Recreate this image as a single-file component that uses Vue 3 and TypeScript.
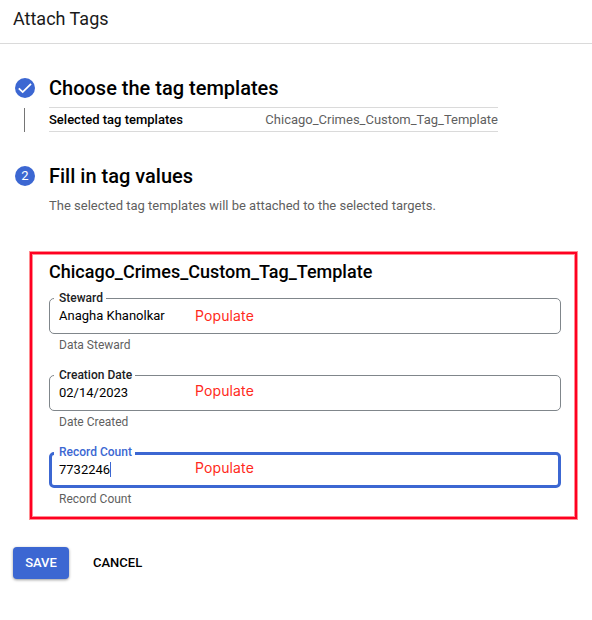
<script setup lang="ts">
import { ref } from 'vue'

interface TagField {
  id: string
  label: string
  value: string
  hint: string
}

const template = 'Chicago_Crimes_Custom_Tag_Template'
const active = ref('count')
const fields = ref<TagField[]>([
  { id: 'steward', label: 'Steward', value: 'Anagha Khanolkar', hint: 'Data Steward' },
  { id: 'date', label: 'Creation Date', value: '02/14/2023', hint: 'Date Created' },
  { id: 'count', label: 'Record Count', value: '7732246', hint: 'Record Count' },
])
</script>

<template>
  <main class="panel">
    <header class="top">Attach Tags</header>

    <section class="step first">
      <div class="rail">
        <svg class="badge" viewBox="0 0 20 20" aria-hidden="true">
          <circle cx="10" cy="10" r="10" />
          <path d="M3.8 10.3 7.7 14.1 16 5.8" />
        </svg>
        <span class="line"></span>
      </div>
      <div class="body">
        <h2 class="title">Choose the tag templates</h2>
        <div class="summary">
          <strong>Selected tag templates</strong>
          <span>{{ template }}</span>
        </div>
      </div>
    </section>

    <section class="step second">
      <div class="rail"><span class="badge number">2</span></div>
      <div class="body">
        <h2 class="title">Fill in tag values</h2>
        <p class="note">The selected tag templates will be attached to the selected targets.</p>
      </div>
    </section>

    <section class="highlight">
      <h3 class="name">{{ template }}</h3>
      <div v-for="f in fields" :key="f.id" class="field" :class="{ active: active === f.id }">
        <div class="box" @click="active = f.id">
          <span class="label">{{ f.label }}</span>
          <span class="value">{{ f.value }}</span>
          <span v-if="active === f.id" class="caret"></span>
          <span class="mark" :class="f.id">Populate</span>
        </div>
        <div class="hint">{{ f.hint }}</div>
      </div>
    </section>

    <footer class="actions">
      <button class="btn save">SAVE</button>
      <button class="btn cancel">CANCEL</button>
    </footer>
  </main>
</template>

<style>
body {
  background: #fff;
}
</style>

<style scoped>
.panel {
  box-sizing: border-box;
  width: 592px;
  height: 620px;
  overflow: hidden;
  font-family: Roboto, 'Liberation Sans', sans-serif;
  font-size: 13px;
  color: #000;
}
.top {
  box-sizing: border-box;
  height: 44px;
  padding: 7px 13px 0;
  border-bottom: 1px solid #dadada;
  font-size: 18px;
  line-height: 24px;
  color: #1a1a1a;
}
.step {
  display: flex;
  padding-left: 15px;
}
.first {
  padding-top: 34px;
}
.second {
  padding-top: 34px;
}
.rail {
  width: 34px;
  flex: none;
}
.badge {
  display: block;
  width: 20px;
  height: 20px;
}
.badge circle {
  fill: #3c67d2;
}
.badge path {
  fill: none;
  stroke: #fff;
  stroke-width: 1.8;
}
.number {
  border-radius: 50%;
  background: #3c67d2;
  color: #fff;
  font-size: 13px;
  line-height: 20px;
  text-align: center;
}
.line {
  display: block;
  width: 1px;
  height: 24px;
  margin: 10px 0 0 9px;
  background: #757575;
}
.title {
  margin: 0;
  font-size: 20px;
  font-weight: 500;
  line-height: 20px;
}
.summary {
  box-sizing: border-box;
  display: flex;
  justify-content: space-between;
  width: 449px;
  height: 25px;
  margin-top: 9px;
  border: solid #dadada;
  border-width: 1px 0;
  line-height: 23px;
}
.summary strong {
  font-weight: 500;
}
.summary span,
.note,
.hint {
  color: #5f5f5f;
}
.note {
  margin: 11px 0 0;
  line-height: 18px;
}
.highlight {
  box-sizing: border-box;
  width: 547px;
  height: 267px;
  margin: 37px 0 0 30px;
  padding: 8px 0 0 17px;
  border: 2px solid #ff0022;
  box-shadow: 0 0 0 1px #ff8d91, inset 0 0 0 1px #ff8d91;
}
.name {
  margin: 0;
  font-size: 18px;
  font-weight: 500;
  line-height: 20px;
}
.field {
  width: 512px;
  height: 77px;
}
.name + .field {
  margin-top: 16px;
}
.box {
  position: relative;
  box-sizing: border-box;
  display: flex;
  align-items: center;
  height: 36px;
  padding: 0 0 2px 9px;
  border: 1px solid #80868b;
  border-radius: 5px;
}
.active .box {
  padding-left: 7px;
  border: 3px solid #3c67d2;
}
.label {
  position: absolute;
  top: -9px;
  left: 4px;
  padding: 0 3px 0 5px;
  background: #fff;
  font-size: 12px;
  font-weight: 500;
  line-height: 16px;
  color: #202124;
}
.active .label {
  top: -11px;
  left: 2px;
  color: #3c67d2;
}
.caret {
  width: 1px;
  height: 15px;
  background: #3c67d2;
}
.mark {
  position: absolute;
  left: 145px;
  top: 7px;
  font-family: Inter, 'Liberation Sans', sans-serif;
  font-size: 14px;
  line-height: 18px;
  letter-spacing: 0.12px;
  color: #ff2a20;
}
.mark.steward {
  top: 8px;
}
.mark.date {
  top: 6px;
}
.active .mark {
  left: 143px;
  top: 4px;
}
.hint {
  padding: 3px 0 0 10px;
  font-size: 12px;
  line-height: 16px;
}
.actions {
  display: flex;
  gap: 24px;
  padding: 28px 0 0 13px;
}
.btn {
  height: 32px;
  padding: 0;
  border: 0;
  background: none;
  font: 500 13px/32px Roboto, 'Liberation Sans', sans-serif;
  color: #000;
}
.save {
  width: 56px;
  border-radius: 4px;
  background: #3c67d2;
  box-shadow: 0 1px 3px rgba(0, 0, 0, 0.4);
  color: #fff;
}
</style>
